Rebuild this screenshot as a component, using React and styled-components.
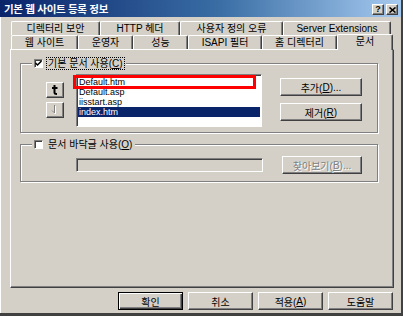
import styled, { createGlobalStyle } from 'styled-components'

const GlobalStyle = createGlobalStyle`
  * {
    box-sizing: border-box;
    margin: 0;
    padding: 0;
  }
  body {
    margin: 0;
    background: #ffffff;
    font-family: "Liberation Sans", "Noto Sans CJK KR", sans-serif;
  }
`

const Window = styled.div`
  width: 403px;
  height: 316px;
  background: #d4d0c8;
  display: flex;
  flex-direction: column;
  border-right: 2px solid #404040;
  border-bottom: 3px solid #404040;
  box-shadow: inset 1px 1px 0 #ffffff;
  font-size: 10px;
  color: #000;
`

const TitleBar = styled.div`
  height: 17px;
  display: flex;
  align-items: center;
  justify-content: space-between;
  padding: 0 3px 0 4px;
  background: linear-gradient(to right, #0a246a 0%, #3a6ea5 55%, #a6caf0 100%);
`

const TitleText = styled.span`
  color: #ffffff;
  font-size: 10.5px;
  font-weight: bold;
  letter-spacing: -0.3px;
`

const TitleButtons = styled.div`
  display: flex;
  gap: 2px;
  margin-top: 2px;
`

const TitleButton = styled.div`
  width: 12px;
  height: 11px;
  background: #d4d0c8;
  border: 1px solid;
  border-color: #ffffff #404040 #404040 #ffffff;
  box-shadow: inset -1px -1px 0 #808080;
  display: flex;
  align-items: center;
  justify-content: center;
  font-size: 9px;
  font-weight: bold;
  line-height: 1;
`

const Body = styled.div`
  flex: 1;
  display: flex;
  flex-direction: column;
  padding: 4px 7px 0 10px;
`

const TabRow = styled.div`
  display: flex;
  align-items: flex-end;
  height: 14px;
  padding-left: 1px;
  position: relative;
  z-index: ${p => p.$front ? 2 : 1};
`

const Tab = styled.div`
  flex: 0 0 ${p => p.$w}px;
  height: ${p => p.$active ? 16 : 14}px;
  margin-bottom: ${p => p.$active ? -1 : 0}px;
  background: #d4d0c8;
  border-top: 1px solid #ffffff;
  border-left: 1px solid #ffffff;
  border-right: 1px solid #404040;
  box-shadow: inset -1px 0 0 #808080;
  border-radius: 2px 2px 0 0;
  display: flex;
  align-items: ${p => p.$active ? 'flex-start' : 'center'};
  padding-top: ${p => p.$active ? 1 : 0}px;
  justify-content: center;
  line-height: 12px;
  white-space: nowrap;
`

const Panel = styled.div`
  height: 239px;
  border: 1px solid;
  border-color: #ffffff #404040 #404040 #ffffff;
  box-shadow: inset -1px -1px 0 #808080;
  padding: 7px 0 0 9px;
  display: flex;
  flex-direction: column;
  gap: 5px;
`

const Group = styled.fieldset`
  width: 358px;
  min-width: 0;
  border: 1px solid #808080;
  box-shadow: 1px 1px 0 #ffffff, inset 1px 1px 0 #ffffff;
  padding: 0;
`

const GroupBody = styled.div`
  padding: ${p => p.$pad};
`

const Legend = styled.legend`
  margin-left: 11px;
  padding: 0 2px;
  height: 12px;
  display: flex;
  align-items: center;
  gap: 4px;
  background: #d4d0c8;
  line-height: 11px;
`

const CheckBox = styled.span`
  width: 9px;
  height: 9px;
  background: #ffffff;
  border: 1px solid;
  border-color: #808080 #ffffff #ffffff #808080;
  box-shadow: inset 1px 1px 0 #404040;
  display: flex;
  align-items: center;
  justify-content: center;
`

const LegendLabel = styled.span`
  padding: 0 1px;
  outline: ${p => p.$focus ? '1px dotted #000' : 'none'};
  white-space: nowrap;
`

const Row = styled.div`
  display: flex;
  align-items: ${p => p.$align || 'flex-start'};
`

const ArrowCol = styled.div`
  display: flex;
  flex-direction: column;
  gap: 4px;
  margin-top: 8px;
  margin-right: 12px;
`

const ArrowButton = styled.div`
  width: 18px;
  height: 16px;
  background: #d4d0c8;
  border: 1px solid;
  border-color: #ffffff #404040 #404040 #ffffff;
  box-shadow: inset -1px -1px 0 #808080;
  display: flex;
  align-items: center;
  justify-content: center;
`

const ListBox = styled.div`
  position: relative;
  width: 186px;
  height: 53px;
  background: #ffffff;
  border: 1px solid;
  border-color: #808080 #ffffff #ffffff #808080;
  box-shadow: inset 1px 1px 0 #404040;
  padding: 2px 1px 0 1px;
  font-size: 9px;
`

const ListItem = styled.div`
  height: 10px;
  line-height: 10px;
  padding-left: 1px;
  white-space: nowrap;
  background: ${p => p.$selected ? '#0a246a' : 'transparent'};
  color: ${p => p.$selected ? '#ffffff' : '#000'};
`

const Annotation = styled.div`
  position: absolute;
  left: -4px;
  top: 0;
  width: 183px;
  height: 14px;
  border: 3px solid #ff0000;
`

const ButtonCol = styled.div`
  display: flex;
  flex-direction: column;
  gap: 7px;
  margin-top: 4px;
  margin-left: 18px;
`

const Button = styled.div`
  width: ${p => p.$w}px;
  height: 18px;
  background: #d4d0c8;
  border: 1px solid;
  border-color: ${p => p.$default ? '#000' : '#ffffff #404040 #404040 #ffffff'};
  box-shadow: ${p => p.$default
    ? 'inset 1px 1px 0 #ffffff, inset -1px -1px 0 #404040, inset -2px -2px 0 #808080'
    : 'inset -1px -1px 0 #808080'};
  display: flex;
  align-items: center;
  justify-content: center;
  white-space: nowrap;
  color: ${p => p.$disabled ? '#808080' : '#000'};
  text-shadow: ${p => p.$disabled ? '1px 1px 0 #ffffff' : 'none'};
`

const TextField = styled.div`
  width: 187px;
  height: 14px;
  background: #d4d0c8;
  border: 1px solid;
  border-color: #808080 #ffffff #ffffff #808080;
  box-shadow: inset 1px 1px 0 #404040;
  margin-right: 19px;
`

const ButtonBar = styled.div`
  display: flex;
  justify-content: flex-end;
  gap: 5px;
  margin-top: 4px;
  padding-right: 1px;
`

const rowOne = [
  { label: '디렉터리 보안', w: 89 },
  { label: 'HTTP 헤더', w: 80 },
  { label: '사용자 정의 오류', w: 103 },
  { label: 'Server Extensions', w: 108 },
]

const rowTwo = [
  { label: '웹 사이트', w: 67 },
  { label: '운영자', w: 55 },
  { label: '성능', w: 55 },
  { label: 'ISAPI 필터', w: 74 },
  { label: '홈 디렉터리', w: 75 },
  { label: '문서', w: 56, active: true },
]

const documents = ['Default.htm', 'Default.asp', 'iisstart.asp', 'index.htm']

const App = () => {
  return (
    <Window>
      <GlobalStyle />
      <TitleBar>
        <TitleText>기본 웹 사이트 등록 정보</TitleText>
        <TitleButtons>
          <TitleButton>?</TitleButton>
          <TitleButton>
            <svg width="7" height="6" viewBox="0 0 7 6">
              <path d="M0.5 0.5 L6.5 5.5 M6.5 0.5 L0.5 5.5" stroke="#000" strokeWidth="1.6" />
            </svg>
          </TitleButton>
        </TitleButtons>
      </TitleBar>

      <Body>
        <TabRow>
          {rowOne.map(t => <Tab key={t.label} $w={t.w}>{t.label}</Tab>)}
        </TabRow>
        <TabRow $front>
          {rowTwo.map(t => <Tab key={t.label} $w={t.w} $active={t.active}>{t.label}</Tab>)}
        </TabRow>

        <Panel>
          <Group>
            <Legend>
              <CheckBox>
                <svg width="7" height="7" viewBox="0 0 7 7">
                  <path d="M0.5 3 L2.5 5 L6.5 1" stroke="#000" strokeWidth="1.5" fill="none" />
                </svg>
              </CheckBox>
              <LegendLabel $focus>기본 문서 사용(<u>C</u>)</LegendLabel>
            </Legend>
            <GroupBody $pad="5px 0 5px 25px">
              <Row>
                <ArrowCol>
                  <ArrowButton>
                    <svg width="8" height="10" viewBox="0 0 8 10">
                      <path d="M3.5 0 V7.5 Q3.5 9 6 9 M1 3 H6.5" stroke="#000" strokeWidth="2" fill="none" />
                    </svg>
                  </ArrowButton>
                  <ArrowButton>
                    <svg width="8" height="10" viewBox="0 0 8 10">
                      <path d="M4.5 1 V9 M2 6.5 L4.5 9" stroke="#ffffff" strokeWidth="1" fill="none" />
                      <path d="M3.5 0 V8 M1 5.5 L3.5 8" stroke="#808080" strokeWidth="1" fill="none" />
                    </svg>
                  </ArrowButton>
                </ArrowCol>
                <ListBox>
                  {documents.map((d, i) => (
                    <ListItem key={d} $selected={i === 3}>{d}</ListItem>
                  ))}
                  <Annotation />
                </ListBox>
                <ButtonCol>
                  <Button $w={82}>추가(<u>D</u>)...</Button>
                  <Button $w={82}>제거(<u>R</u>)</Button>
                </ButtonCol>
              </Row>
            </GroupBody>
          </Group>

          <Group>
            <Legend>
              <CheckBox />
              <LegendLabel>문서 바닥글 사용(<u>O</u>)</LegendLabel>
            </Legend>
            <GroupBody $pad="6px 0 7px 55px">
              <Row $align="center">
                <TextField />
                <Button $w={80} $disabled>찾아보기(<u>B</u>)...</Button>
              </Row>
            </GroupBody>
          </Group>
        </Panel>

        <ButtonBar>
          <Button $w={65} $default>확인</Button>
          <Button $w={65}>취소</Button>
          <Button $w={65}>적용(<u>A</u>)</Button>
          <Button $w={65}>도움말</Button>
        </ButtonBar>
      </Body>
    </Window>
  )
}

export default App
